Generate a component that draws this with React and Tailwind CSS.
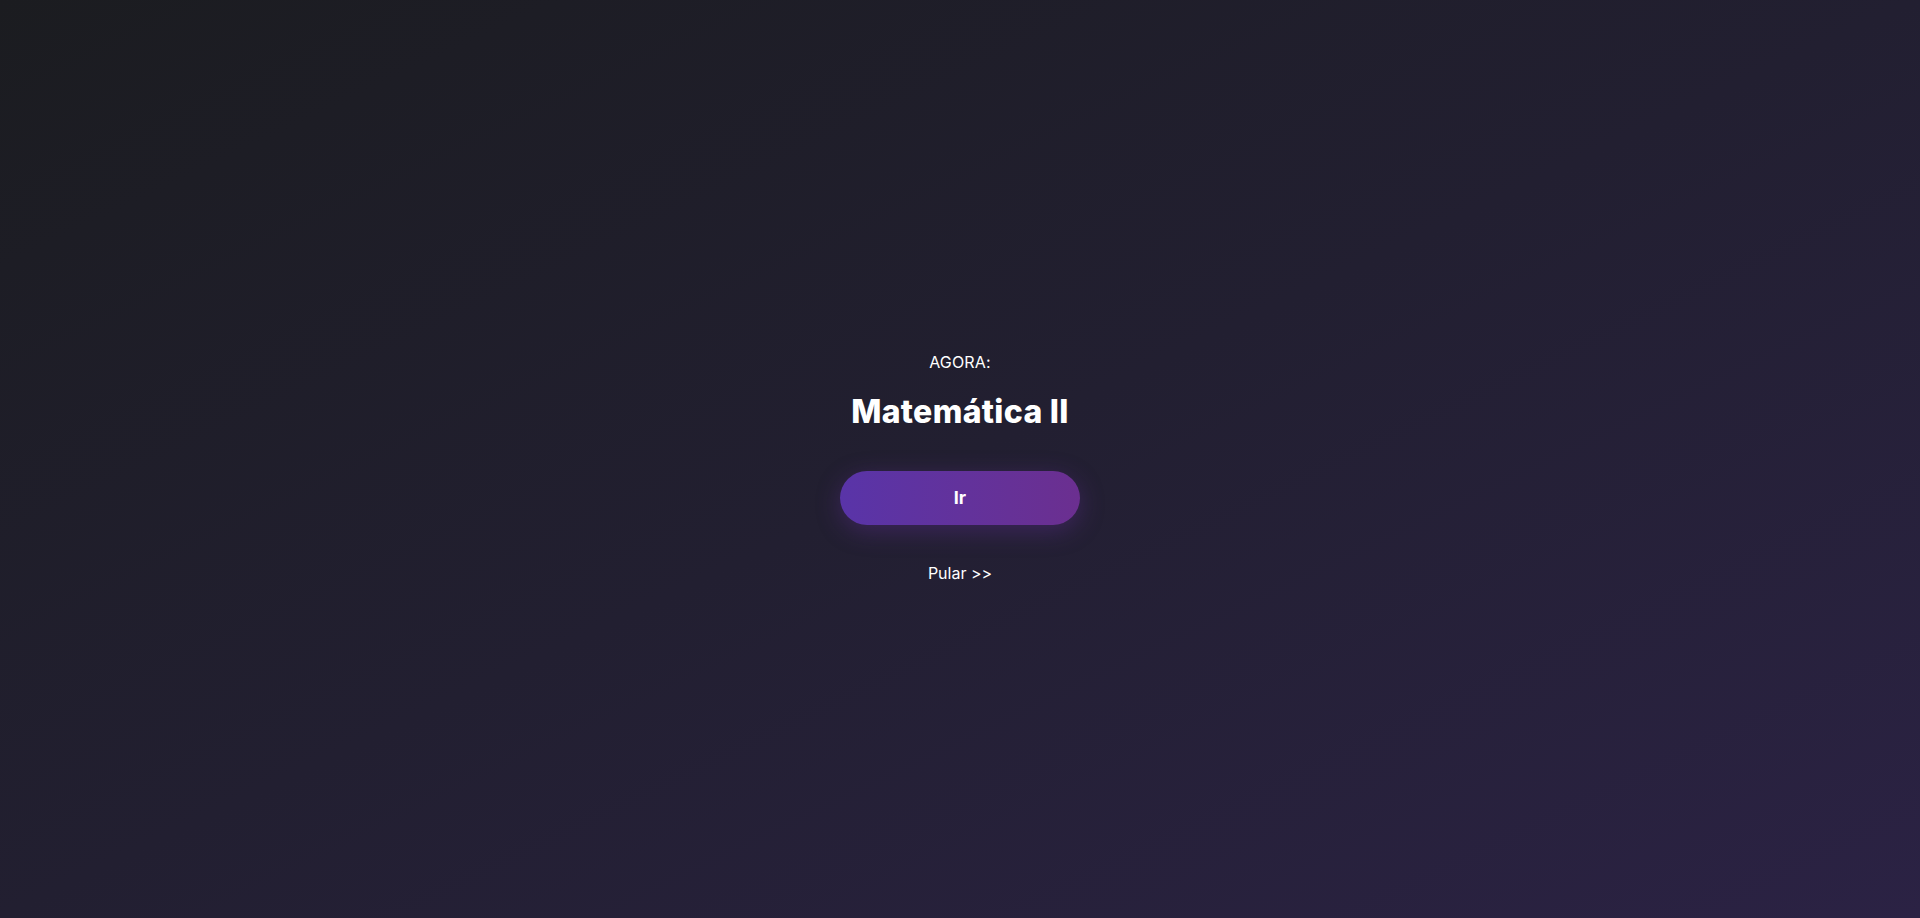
export default function App() {
  return (
    <div className="w-full h-[918px] flex flex-col items-center justify-center bg-gradient-to-br from-[#1b1c20] via-[#221f31] to-[#2b2244] text-white font-['Inter',sans-serif]">
      <div className="flex flex-col items-center mt-[16px]">
        <p className="text-[16px] leading-[20px] tracking-[0.01em]">AGORA:</p>
        <h1 className="mt-[21px] text-[32px] leading-[38px] font-extrabold tracking-[0.01em]">Matemática II</h1>
        <button className="mt-[40px] w-[240px] h-[54px] rounded-full bg-gradient-to-r from-[#5934a8] to-[#6b2f90] text-[18px] font-bold shadow-[0_6px_24px_rgba(110,50,170,0.35)]">
          Ir
        </button>
        <a className="mt-[38px] text-[16px] leading-[20px] cursor-pointer">Pular &gt;&gt;</a>
      </div>
    </div>
  );
}
